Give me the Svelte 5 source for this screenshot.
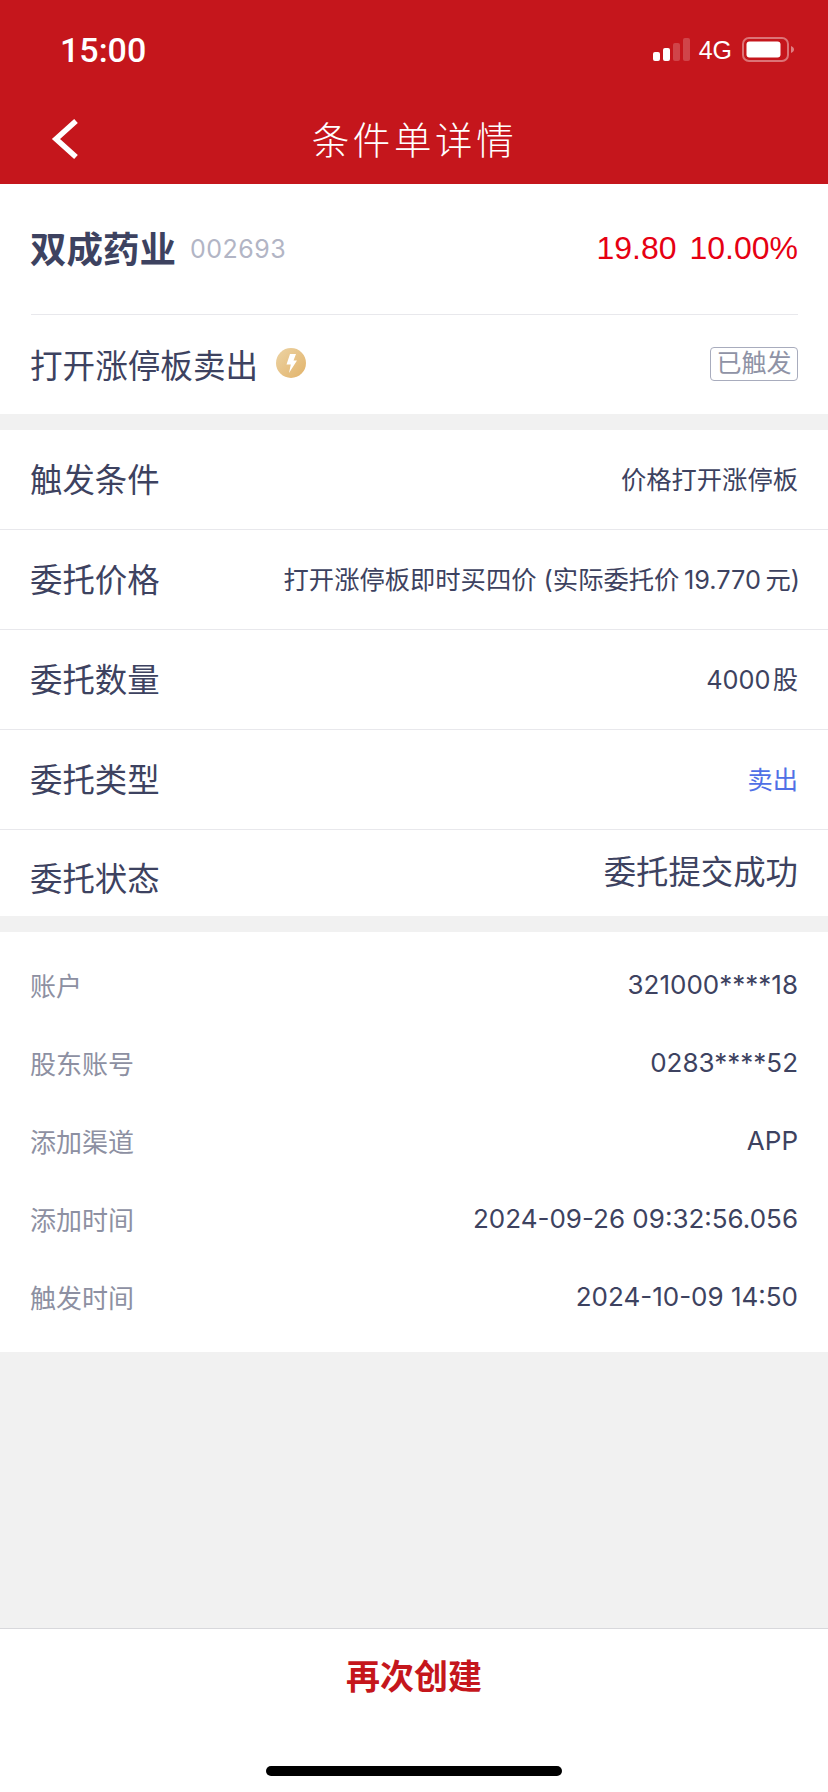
<script>
  const mainRows = [
    { label: '触发条件', value: '价格打开涨停板', cls: 'v25' },
    { label: '委托价格', value: '打开涨停板即时买四价 (实际委托价\u200919.770\u2009元)', cls: 'v25 long' },
    { label: '委托数量', value: '4000\u200a股', cls: 'v25' },
    { label: '委托类型', value: '卖出', cls: 'v25 blue' },
    { label: '委托状态', value: '委托提交成功', cls: 'v32', last: true }
  ];
  const infoRows = [
    { label: '账户', value: '321000****18' },
    { label: '股东账号', value: '0283****52' },
    { label: '添加渠道', value: 'APP' },
    { label: '添加时间', value: '2024-09-26 09:32:56.056' },
    { label: '触发时间', value: '2024-10-09 14:50' }
  ];
</script>

<div class="page">
  <header class="top">
    <div class="status">
      <span class="time">15:00</span>
      <div class="status-right">
        <svg class="signal" width="37" height="24" viewBox="0 0 37 24">
          <rect x="0" y="14" width="7" height="9" rx="2" fill="#fff" />
          <rect x="10" y="10" width="7" height="13" rx="2" fill="#fff" />
          <rect x="20" y="5" width="7" height="18" rx="2" fill="#fff" opacity="0.2" />
          <rect x="30" y="0" width="7" height="23" rx="2" fill="#fff" opacity="0.2" />
        </svg>
        <span class="net">4G</span>
        <svg class="battery" width="52" height="26" viewBox="0 0 52 26">
          <rect x="1" y="1" width="45" height="23" rx="6" fill="none" stroke="#fff" stroke-opacity="0.4" stroke-width="2" />
          <rect x="4.5" y="4.5" width="34" height="16" rx="3" fill="#fff" />
          <path d="M49 9 C51 10 52 11 52 12.5 C52 14 51 15 49 16 Z" fill="#fff" fill-opacity="0.45" />
        </svg>
      </div>
    </div>
    <div class="nav">
      <svg class="back" width="30" height="42" viewBox="0 0 30 42">
        <path d="M26 3 L6 21 L26 39" fill="none" stroke="#fff" stroke-width="5.5" />
      </svg>
      <h1>条件单详情</h1>
    </div>
  </header>

  <section class="card stock">
    <div class="stock-head">
      <div class="stock-name">
        <strong>双成药业</strong>
        <span class="code">002693</span>
      </div>
      <div class="quote">
        <span>19.80</span>
        <span>10.00%</span>
      </div>
    </div>
    <div class="stock-type">
      <div class="type-name">
        <span>打开涨停板卖出</span>
        <svg width="30" height="30" viewBox="0 0 30 30">
          <defs>
            <linearGradient id="bolt-bg" x1="0" y1="0" x2="1" y2="1">
              <stop offset="0" stop-color="#ecd3a4" />
              <stop offset="1" stop-color="#e2b36a" />
            </linearGradient>
          </defs>
          <circle cx="15" cy="15" r="15" fill="url(#bolt-bg)" />
          <path d="M14 6 H20 L17.5 12.5 H21 L13 25 L14.8 16.5 H10.5 Z" fill="#fff" />
        </svg>
      </div>
      <span class="tag">已触发</span>
    </div>
  </section>

  <section class="card rows">
    {#each mainRows as row}
      <div class="row" class:last={row.last}>
        <span class="row-label">{row.label}</span>
        <span class="row-value {row.cls}">{row.value}</span>
      </div>
    {/each}
  </section>

  <section class="card info">
    {#each infoRows as row}
      <div class="info-row">
        <span class="info-label">{row.label}</span>
        <span class="info-value">{row.value}</span>
      </div>
    {/each}
  </section>

  <div class="spacer"></div>

  <footer class="bottom">
    <button class="again">再次创建</button>
    <div class="home-bar"></div>
  </footer>
</div>

<style>
  :global(body) {
    margin: 0;
    background: #f1f1f1;
  }

  .page {
    width: 828px;
    height: 1792px;
    display: flex;
    flex-direction: column;
    background: #f1f1f1;
    color: #3d4260;
    font-family: Inter, "Noto Sans CJK SC", sans-serif;
  }

  .top {
    height: 184px;
    background: #c5161c;
    color: #fff;
    flex: none;
  }

  .status {
    height: 100px;
    box-sizing: border-box;
    padding: 0 34px 0 60px;
    display: flex;
    justify-content: space-between;
    align-items: center;
  }

  .time {
    font-family: Roboto, sans-serif;
    font-size: 34px;
    line-height: 1;
    font-weight: 500;
  }

  .status-right {
    display: flex;
    align-items: center;
  }

  .signal {
    margin-right: 9px;
  }

  .net {
    font-family: "Liberation Sans", sans-serif;
    font-size: 25px;
    line-height: 1;
    margin-right: 10px;
  }

  .nav {
    height: 84px;
    position: relative;
    display: flex;
    align-items: center;
    justify-content: center;
  }

  .back {
    position: absolute;
    left: 50px;
    top: 18px;
  }

  h1 {
    margin: 0 0 4px 1px;
    font-size: 37.5px;
    font-weight: 300;
    letter-spacing: 3.6px;
    line-height: 1.2;
  }

  .card {
    background: #fff;
    flex: none;
  }

  .stock {
    height: 230px;
    padding: 0 30px 0 31px;
    margin-bottom: 16px;
  }

  .stock-head {
    height: 131px;
    box-sizing: border-box;
    display: flex;
    justify-content: space-between;
    align-items: center;
    border-bottom: 1px solid #e8e8ec;
    font-size: 30px;
  }

  .stock-name {
    display: flex;
    align-items: center;
    margin-left: -1px;
  }

  .stock-name strong {
    font-size: 36.5px;
    font-weight: 700;
    padding-bottom: 4px;
  }

  .code {
    margin-left: 14px;
    font-size: 25px;
    letter-spacing: 0.5px;
    color: #b2b5c5;
  }

  .quote {
    display: flex;
    gap: 13px;
    color: #e60012;
    font-family: "Liberation Sans", sans-serif;
    font-size: 32px;
    padding-bottom: 2px;
  }

  .stock-type {
    height: 99px;
    box-sizing: border-box;
    padding-bottom: 3px;
    display: flex;
    justify-content: space-between;
    align-items: center;
  }

  .type-name {
    display: flex;
    align-items: center;
    gap: 18px;
    font-size: 32.6px;
    margin-left: -1px;
  }

  .tag {
    box-sizing: border-box;
    width: 88px;
    height: 34px;
    margin-top: 2px;
    border: 1px solid #a8acbd;
    border-radius: 4px;
    color: #8f93a6;
    font-size: 25px;
    line-height: 31px;
    white-space: nowrap;
    display: flex;
    justify-content: center;
  }

  .rows {
    margin-bottom: 16px;
  }

  .row {
    height: 100px;
    box-sizing: border-box;
    padding: 0 30px 4px 30px;
    display: flex;
    justify-content: space-between;
    align-items: center;
    border-bottom: 1px solid #e8e8ec;
  }

  .row.last {
    height: 86px;
    padding-bottom: 7px;
    border-bottom: none;
  }

  .row-label {
    font-size: 32.4px;
    white-space: nowrap;
  }

  .row.last .row-label {
    padding-top: 13px;
  }

  .row-value {
    white-space: nowrap;
  }

  .v25 {
    font-size: 25.3px;
  }

  .v32 {
    font-size: 32.4px;
  }

  .long {
    margin-right: -2px;
  }

  .blue {
    color: #5070e6;
  }

  .info {
    padding: 13px 30px 17px 30px;
  }

  .info-row {
    height: 78px;
    display: flex;
    justify-content: space-between;
    align-items: center;
    font-size: 26px;
  }

  .info-label {
    color: #8d90a2;
  }

  .spacer {
    flex: 1;
  }

  .bottom {
    height: 164px;
    flex: none;
    box-sizing: border-box;
    background: #fff;
    border-top: 1px solid #d8d8dc;
    display: flex;
    flex-direction: column;
    align-items: center;
  }

  .again {
    margin-top: 24px;
    padding: 0;
    border: none;
    background: none;
    font: inherit;
    font-size: 34px;
    font-weight: 700;
    line-height: 48px;
    color: #c5161c;
  }

  .home-bar {
    margin-top: 65px;
    width: 296px;
    height: 10px;
    border-radius: 5px;
    background: #000;
  }
</style>
